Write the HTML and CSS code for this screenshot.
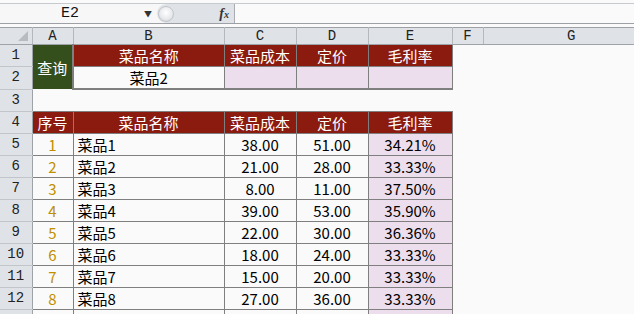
FILE: index.html
```html
<!DOCTYPE html>
<html lang="zh-CN">
<head>
    <meta charset="UTF-8">
    <title>菜品毛利率查询</title>
    <link rel="stylesheet" href="styles.css">
</head>
<body>
    <!-- Formula bar -->
    <div class="formula-bar">
        <div class="name-box">
            <span class="cell-ref">E2</span>
            <span class="drop">&#9660;</span>
        </div>
        <div class="fx-area">
            <span class="grip"></span>
            <span class="fx">f<small>x</small></span>
        </div>
        <div class="formula-input"></div>
    </div>

    <table class="sheet">
        <colgroup>
            <col class="c-row"><col class="c-a"><col class="c-b"><col class="c-c"><col class="c-d"><col class="c-e"><col class="c-f"><col>
        </colgroup>
        <tr class="col-heads">
            <th class="corner"><span class="tri"></span></th>
            <th>A</th><th>B</th><th>C</th><th>D</th><th>E</th><th>F</th><th>G</th>
        </tr>
        <tr>
            <th class="rh">1</th>
            <td class="query" rowspan="2">查询</td>
            <td class="hd">菜品名称</td>
            <td class="hd">菜品成本</td>
            <td class="hd">定价</td>
            <td class="hd">毛利率</td>
            <td></td><td></td>
        </tr>
        <tr class="pick">
            <th class="rh">2</th>
            <td class="val">菜品2</td>
            <td class="lav"></td>
            <td class="lav"></td>
            <td class="lav last"></td>
            <td></td><td></td>
        </tr>
        <tr>
            <th class="rh">3</th>
            <td></td><td></td><td></td><td></td><td></td><td></td><td></td>
        </tr>
        <tr>
            <th class="rh">4</th>
            <td class="hd">序号</td>
            <td class="hd">菜品名称</td>
            <td class="hd">菜品成本</td>
            <td class="hd">定价</td>
            <td class="hd">毛利率</td>
            <td></td><td></td>
        </tr>
        <tr>
            <th class="rh">5</th>
            <td class="no">1</td><td class="name">菜品1</td><td class="num">38.00</td><td class="num">51.00</td><td class="pct">34.21%</td><td></td><td></td>
        </tr>
        <tr>
            <th class="rh">6</th>
            <td class="no">2</td><td class="name">菜品2</td><td class="num">21.00</td><td class="num">28.00</td><td class="pct">33.33%</td><td></td><td></td>
        </tr>
        <tr>
            <th class="rh">7</th>
            <td class="no">3</td><td class="name">菜品3</td><td class="num">8.00</td><td class="num">11.00</td><td class="pct">37.50%</td><td></td><td></td>
        </tr>
        <tr>
            <th class="rh">8</th>
            <td class="no">4</td><td class="name">菜品4</td><td class="num">39.00</td><td class="num">53.00</td><td class="pct">35.90%</td><td></td><td></td>
        </tr>
        <tr>
            <th class="rh">9</th>
            <td class="no">5</td><td class="name">菜品5</td><td class="num">22.00</td><td class="num">30.00</td><td class="pct">36.36%</td><td></td><td></td>
        </tr>
        <tr>
            <th class="rh">10</th>
            <td class="no">6</td><td class="name">菜品6</td><td class="num">18.00</td><td class="num">24.00</td><td class="pct">33.33%</td><td></td><td></td>
        </tr>
        <tr>
            <th class="rh">11</th>
            <td class="no">7</td><td class="name">菜品7</td><td class="num">15.00</td><td class="num">20.00</td><td class="pct">33.33%</td><td></td><td></td>
        </tr>
        <tr>
            <th class="rh">12</th>
            <td class="no">8</td><td class="name">菜品8</td><td class="num">27.00</td><td class="num">36.00</td><td class="pct">33.33%</td><td></td><td></td>
        </tr>
        <tr>
            <th class="rh"></th>
            <td class="no"></td><td class="name"></td><td class="num"></td><td class="num"></td><td class="pct"></td><td></td><td></td>
        </tr>
    </table>
</body>
</html>
```

FILE: styles.css
```css
body { margin: 0; background: #fafafa; font-family: "Noto Sans CJK SC", "Noto Sans", sans-serif; overflow: hidden; }

/* formula bar */
.formula-bar { display: flex; height: 19px; margin-top: 3px; border-top: 1px solid #c6cacf; border-bottom: 1px solid #9da1a6; background: #f7f7f7; }
.name-box { width: 157px; display: flex; align-items: center; position: relative; }
.cell-ref { margin-left: 61px; font-family: "Liberation Mono", monospace; font-size: 15px; color: #111; }
.drop { position: absolute; left: 144px; top: 4px; font-size: 8px; color: #333; }
.fx-area { width: 77px; background: #dfe2e6; border-radius: 10px 0 0 10px; display: flex; align-items: center; justify-content: space-between; border-right: 1px solid #a9adb2; }
.grip { width: 14px; height: 14px; margin-left: 1px; border-radius: 50%; background: radial-gradient(circle at 50% 40%, #ffffff 0, #e6e8eb 60%, #c8ccd1 100%); border: 1px solid #c2c6cb; }
.fx { margin-right: 5px; font-family: "Liberation Serif", serif; font-style: italic; font-weight: bold; font-size: 14px; color: #333; }
.fx small { font-size: 10px; }
.formula-input { flex: 1; background: #fafafa; }

/* sheet */
.sheet { border-collapse: collapse; table-layout: fixed; width: 660px; margin-top: 3px; border-top: 1px solid #9da1a6; }
.c-row { width: 32px; }
.c-a { width: 41px; }
.c-b { width: 151px; }
.c-c { width: 72px; }
.c-d { width: 72px; }
.c-e { width: 84px; }
.c-f { width: 31px; }

.sheet td, .sheet th { padding: 0; height: 21px; font-size: 15px; line-height: 21px; white-space: nowrap; overflow: hidden; }
.col-heads th { height: 16px; line-height: 16px; background: #dfe3e8; border-right: 1px solid #b5b9be; border-bottom: 1px solid #9ea3a8; font-family: "Liberation Mono", monospace; font-weight: normal; font-size: 14px; color: #222; }
.corner { position: relative; }
.tri { position: absolute; right: 4px; bottom: 3px; width: 0; height: 0; border-left: 10px solid transparent; border-bottom: 10px solid #b8bcc1; }
.sheet .rh { background: #dfe3e8; border-right: 1px solid #9ea3a8; border-bottom: 1px solid #c2c6cb; font-family: "Liberation Mono", monospace; font-weight: normal; font-size: 14px; color: #222; text-align: center; }

.hd { background: #8b1a0f; color: #fff; text-align: center; border: 1px solid #7f7f7f; }
.query { background: #354f1c; color: #fff; text-align: center; border-right: 2px solid #7f7f7f; }
.val { background: #fafafa; text-align: center; border: 1px solid #7f7f7f; border-bottom-width: 2px; }
.lav { background: #ecdeec; border: 1px solid #7f7f7f; border-bottom-width: 2px; }

.no, .name, .num, .pct { border: 1px solid #7f7f7f; }
.no { text-align: center; color: #bf8f00; }
.sheet .name { padding-left: 4px; color: #000; }
.num { text-align: center; color: #000; }
.pct { text-align: center; background: #ecdeec; color: #000; }
```
